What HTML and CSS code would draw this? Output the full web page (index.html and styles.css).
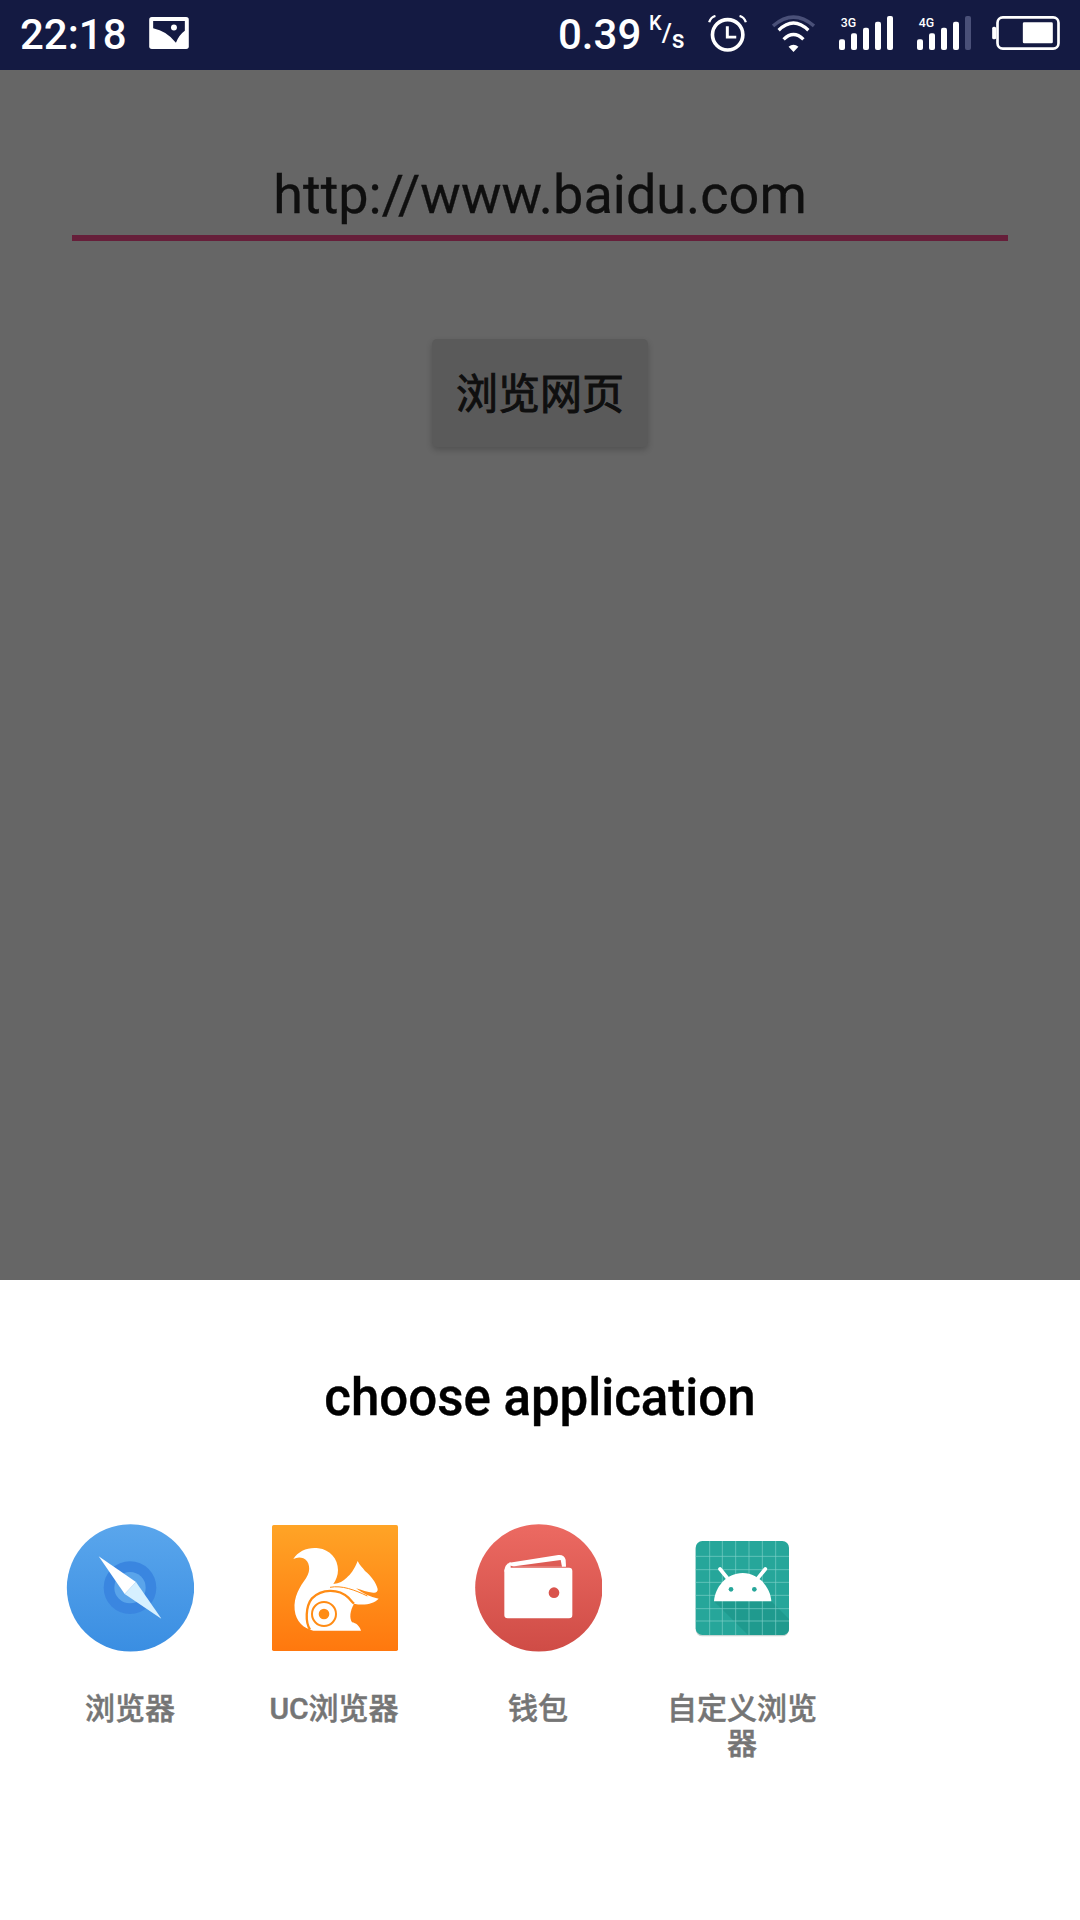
FILE: index.html
```html
<!DOCTYPE html>
<html lang="zh-CN">
<head>
    <meta charset="UTF-8">
    <meta name="viewport" content="width=device-width, initial-scale=1.0">
    <title>choose application</title>
    <link rel="stylesheet" href="styles.css">
</head>
<body>

<div class="status-bar">
    <span class="clock">22:18</span>
    <svg class="st-picture" viewBox="447 50 120 97">
        <rect x="447" y="50" width="120" height="97" rx="8" fill="#fff"/>
        <path d="M459 62H555V92Q538 104 528 128Q500 92 459 84Z" fill="#141a42"/>
        <circle cx="522" cy="82" r="9" fill="#fff"/>
    </svg>
    <span class="spacer"></span>
    <span class="speed">0.39</span>
    <span class="speed-unit"><span class="unit-k">K</span><span class="unit-slash">/</span><span class="unit-s">s</span></span>
    <svg class="st-alarm" viewBox="0 0 117 112" fill="none" stroke="#fff">
        <circle cx="59" cy="60" r="46" stroke-width="11"/>
        <path d="M58 34V67H85" stroke-width="9"/>
        <path d="M3 22Q8 6 22 3" stroke-width="7"/>
        <path d="M114 22Q109 6 95 3" stroke-width="7"/>
    </svg>
    <svg class="st-wifi" viewBox="0 0 130 112" fill="none" stroke="#fff">
        <path d="M3 33Q65 -20 127 33" stroke="#4a5078" stroke-width="11"/>
        <path d="M20 46Q65 2 110 46" stroke-width="10"/>
        <path d="M35 74Q65 44 95 74" stroke-width="10"/>
        <path d="M50 96Q65 84 80 96L65 112Z" fill="#fff" stroke="none"/>
    </svg>
    <svg class="st-signal" viewBox="0 0 162 102">
        <text x="5" y="32" class="net-label">3G</text>
        <rect x="0" y="70" width="18" height="32" rx="6" fill="#fff"/>
        <rect x="36" y="52" width="18" height="50" rx="6" fill="#fff"/>
        <rect x="72" y="35" width="18" height="67" rx="6" fill="#fff"/>
        <rect x="108" y="17" width="18" height="85" rx="6" fill="#fff"/>
        <rect x="144" y="0" width="18" height="102" rx="6" fill="#fff"/>
    </svg>
    <svg class="st-signal" viewBox="0 0 162 102">
        <text x="5" y="32" class="net-label">4G</text>
        <rect x="0" y="70" width="18" height="32" rx="6" fill="#fff"/>
        <rect x="36" y="52" width="18" height="50" rx="6" fill="#fff"/>
        <rect x="72" y="35" width="18" height="67" rx="6" fill="#fff"/>
        <rect x="108" y="17" width="18" height="85" rx="6" fill="#fff"/>
        <rect x="144" y="0" width="18" height="102" rx="6" fill="#4a5078"/>
    </svg>
    <svg class="st-battery" viewBox="0 0 203 102">
        <rect x="16" y="4" width="183" height="94" rx="16" fill="none" stroke="#fff" stroke-width="8"/>
        <rect x="0" y="32" width="12" height="38" rx="5" fill="#fff"/>
        <rect x="92" y="19" width="90" height="63" rx="4" fill="#fff"/>
    </svg>
</div>

<div class="main">
    <div class="url-field">http://www.baidu.com</div>
    <div class="browse-btn">浏览网页</div>
</div>

<div class="sheet">
    <h2 class="sheet-title">choose application</h2>
    <div class="app-grid">
        <div class="app-item">
            <svg class="app-icon" viewBox="80 72 384 384">
                <defs>
                    <linearGradient id="blueGrad" x1="0" y1="0" x2="0" y2="1">
                        <stop offset="0" stop-color="#5aa6ec"/>
                        <stop offset="1" stop-color="#3a8ee2"/>
                    </linearGradient>
                </defs>
                <circle cx="273.500" cy="263.500" r="191" fill="url(#blueGrad)"/>
                <circle cx="272" cy="263" r="79" fill="#3a86e0"/>
                <circle cx="272" cy="263" r="47" fill="#5aa4ea"/>
                <path d="M178 169L290 246L256 282Z" fill="#fff"/>
                <path d="M367 357L290 246L256 282Z" fill="#d6f0ff"/>
            </svg>
            <div class="app-name">浏览器</div>
        </div>
        <div class="app-item">
            <svg class="app-icon" viewBox="-30 -33 384 384">
                <defs>
                    <linearGradient id="ucGrad" x1="0" y1="0" x2="0" y2="1">
                        <stop offset="0" stop-color="#ffa426"/>
                        <stop offset="1" stop-color="#ff780e"/>
                    </linearGradient>
                </defs>
                <rect x="-24" y="-30" width="378" height="378" rx="5" fill="url(#ucGrad)"/>
                <path d="M40 72C55 48 85 36 115 40C150 44 174 72 174 105C174 122 168 135 160 147C178 145 190 138 200 128C212 118 222 105 233 78C238 90 248 98 255 108C272 122 288 142 293 162C294 170 288 174 280 173C262 172 245 165 228 160C248 175 270 186 296 191C282 205 255 213 222 206C210 228 208 248 216 262C228 264 238 272 243 287L100 287C70 280 48 260 44 225C40 185 60 155 78 130C95 105 88 78 70 70C60 66 50 67 40 72Z" fill="#fff"/>
                <path d="M90 284C76 262 76 215 96 190C125 161 175 160 205 188C213 196 216 201 222 206" fill="none" stroke="#ff8c15" stroke-width="7"/>
                <path d="M150 157C185 150 225 165 262 183" fill="none" stroke="#ff8c15" stroke-width="3"/>
                <circle cx="132" cy="237" r="36" fill="none" stroke="#ff8c15" stroke-width="6"/>
                <circle cx="132" cy="237" r="16" fill="#ff8c15"/>
            </svg>
            <div class="app-name">UC浏览器</div>
        </div>
        <div class="app-item">
            <svg class="app-icon" viewBox="102 72 384 384">
                <defs>
                    <linearGradient id="redGrad" x1="0" y1="0" x2="0" y2="1">
                        <stop offset="0" stop-color="#ec6a62"/>
                        <stop offset="1" stop-color="#cf4c46"/>
                    </linearGradient>
                </defs>
                <circle cx="296.500" cy="263.500" r="191" fill="url(#redGrad)"/>
                <path d="M208 188L355 165Q373 163 377 180L378 200H222L208 196Z" fill="#fff"/>
                <path d="M212 200L362 180L366 200Z" fill="#dd5c55"/>
                <rect x="193" y="203" width="204" height="152" rx="10" fill="#fff"/>
                <path d="M193 215Q193 192 212 187V205Z" fill="#fff"/>
                <circle cx="342" cy="278" r="16" fill="#d9534c"/>
            </svg>
            <div class="app-name">钱包</div>
        </div>
        <div class="app-item">
            <svg class="app-icon" viewBox="715 71 384 384">
                <rect x="768" y="126" width="280" height="282" rx="20" fill="#c9d6d4"/>
                <rect x="768" y="122" width="280" height="282" rx="20" fill="#26a69a"/>
                <path d="M823 303L995 303L1048 356V384Q1048 404 1028 404H925Z" fill="#1f9a8e"/>
                <path d="M810 122V404M848 122V404M888 122V404M928 122V404M968 122V404M1008 122V404M768 168H1048M768 208H1048M768 246H1048M768 285H1048M768 325H1048M768 362H1048" stroke="#7fd0c8" stroke-width="2" fill="none"/>
                <path d="M823 303C825 262 860 218 909 218C958 218 993 262 995 303Z" fill="#fff"/>
                <path d="M841 206L862 232M977 206L956 232" stroke="#fff" stroke-width="11" stroke-linecap="round"/>
                <circle cx="874" cy="267" r="7" fill="#26a69a"/>
                <circle cx="944" cy="267" r="7" fill="#26a69a"/>
            </svg>
            <div class="app-name">自定义浏览器</div>
        </div>
    </div>
</div>

</body>
</html>
```

FILE: styles.css
```css
body {
    margin: 0;
    width: 1080px;
    height: 1920px;
    overflow: hidden;
    background-color: #666;
    font-family: Roboto, "Noto Sans CJK SC", sans-serif;
    display: flex;
    flex-direction: column;
}

.status-bar {
    height: 70px;
    background-color: #141a42;
    color: #fff;
    display: flex;
    align-items: center;
    padding: 0 20px;
    box-sizing: border-box;
    flex-shrink: 0;
}

.clock {
    font-size: 42px;
    font-weight: 500;
    line-height: 66px;
}

.st-picture {
    width: 40px;
    height: 32px;
    margin-left: 22px;
    margin-bottom: 4px;
}

.spacer {
    flex: 1;
}

.speed {
    width: 80px;
    font-size: 42px;
    font-weight: 500;
    line-height: 66px;
    white-space: nowrap;
}

.speed-unit {
    font-size: 21px;
    line-height: 66px;
    margin-left: 11px;
    width: 36px;
    white-space: nowrap;
}

.unit-k,
.unit-slash,
.unit-s {
    line-height: 1;
    font-weight: 500;
}

.unit-k {
    font-size: 20px;
    vertical-align: 12px;
}

.unit-slash {
    font-size: 26px;
}

.unit-s {
    font-size: 25px;
    vertical-align: -6px;
}

.st-alarm {
    width: 39px;
    height: 37px;
    margin-left: 23px;
    margin-bottom: 4px;
}

.st-wifi {
    width: 43px;
    height: 37px;
    margin-left: 25px;
    margin-bottom: 4px;
}

.st-signal {
    width: 54px;
    height: 34px;
    margin-left: 24px;
    margin-bottom: 4px;
}

.net-label {
    font-family: Roboto, sans-serif;
    font-size: 37px;
    font-weight: 500;
    fill: #fff;
}

.st-battery {
    width: 68px;
    height: 34px;
    margin-left: 21px;
    margin-bottom: 4px;
}

.main {
    height: 1210px;
    flex-shrink: 0;
    padding: 0 72px;
    box-sizing: border-box;
    display: flex;
    flex-direction: column;
    align-items: center;
}

.url-field {
    width: 100%;
    margin-top: 85px;
    height: 86px;
    line-height: 80px;
    box-sizing: border-box;
    border-bottom: 6px solid #661f3a;
    text-align: center;
    font-size: 54px;
    color: #0f0f0f;
    -webkit-text-stroke: 0.3px #0f0f0f;
}

.browse-btn {
    margin-top: 98px;
    width: 216px;
    height: 108px;
    line-height: 112px;
    text-align: center;
    background-color: #5a5a5a;
    border-radius: 5px;
    box-shadow: 0 3px 6px rgba(0, 0, 0, 0.2);
    font-size: 42px;
    color: #0f0f0f;
    -webkit-text-stroke: 1px #0f0f0f;
}

.sheet {
    flex: 1;
    background-color: #fff;
}

.sheet-title {
    margin: 85px 0 0;
    text-align: center;
    font-size: 51px;
    font-weight: 500;
    line-height: 66px;
    color: #000;
    -webkit-text-stroke: 0.4px #000;
}

.app-grid {
    margin-top: 93px;
    padding: 0 32px 0 28px;
    display: grid;
    grid-template-columns: repeat(5, 1fr);
}

.app-item {
    display: flex;
    flex-direction: column;
    align-items: center;
}

.app-icon {
    width: 128px;
    height: 128px;
}

.app-name {
    margin-top: 39px;
    max-width: 160px;
    text-align: center;
    font-size: 30px;
    font-weight: 500;
    line-height: 35px;
    color: #757575;
    -webkit-text-stroke: 0.5px #757575;
}
```
